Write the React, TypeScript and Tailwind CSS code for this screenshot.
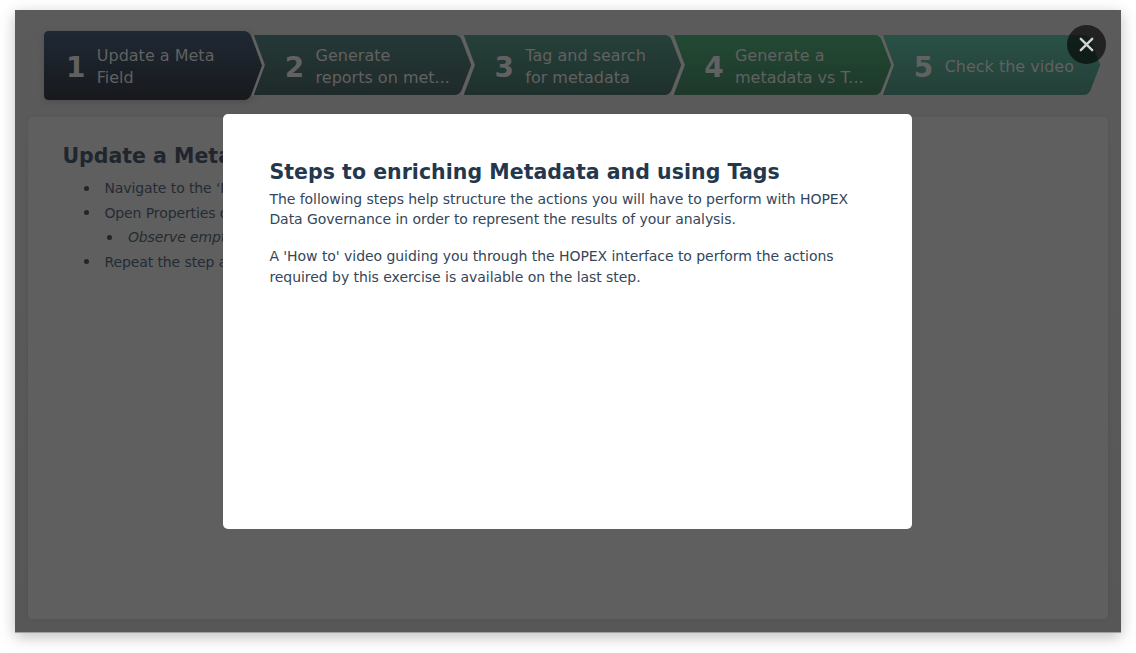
type Step = { n: number; lines: string[]; from: string; to: string };

const steps: Step[] = [
  { n: 1, lines: ["Update a Meta", "Field"], from: "#1f2934", to: "#18191d" },
  { n: 2, lines: ["Generate", "reports on met..."], from: "#243937", to: "#1f2a2a" },
  { n: 3, lines: ["Tag and search", "for metadata"], from: "#254139", to: "#1f302c" },
  { n: 4, lines: ["Generate a", "metadata vs T..."], from: "#224a34", to: "#1e382a" },
  { n: 5, lines: ["Check the video"], from: "#2a5146", to: "#243f37" },
];

function StepShape({ step }: { step: Step }) {
  const first = step.n === 1;
  const last = step.n === steps.length;
  const id = `step-${step.n}`;
  return (
    <svg
      className={
        first
          ? "absolute left-0 top-0 h-[69px] w-[219px] overflow-visible drop-shadow-[0_2px_3px_rgba(0,0,0,0.14)]"
          : "absolute left-0 top-[-0.3px] h-[60px] w-[219px] overflow-visible"
      }
      viewBox={first ? "0 0 219 69" : "0 0 219 60"}
      aria-hidden="true"
    >
      <defs>
        <linearGradient id={id} x1="0" y1="0" x2="0" y2="1">
          <stop offset="0" stopColor={step.from} />
          <stop offset="1" stopColor={step.to} />
        </linearGradient>
      </defs>
      <path
        fill={`url(#${id})`}
        d={
          first
            ? "M5 0H199.5Q205 0 207.3 5.5L218 34.5L207.3 63.5Q205 69 199.5 69H5Q0 69 0 64V5Q0 0 5 0Z"
            : "M0.5 0H200.5Q205.5 0 207.6 5L217.2 30L207.6 55Q205.5 60 200.5 60H0.5Q-0.3 60 0 59.2L11 30L0 0.8Q-0.3 0 0.5 0Z"
        }
      />
      {!last && (
        <path
          d={first ? "M208.8 4.5L219.6 34.5L208.8 64.5" : "M208 0.5L219 30L208 59.5"}
          fill="none"
          stroke="#626262"
          strokeWidth="2.4"
        />
      )}
    </svg>
  );
}

function Steps() {
  return (
    <ol className="flex h-[69px] items-center text-[#616161]">
      {steps.map((s) => (
        <li
          key={s.n}
          className={
            s.n === 1
              ? "relative flex h-[69px] w-[210.3px] shrink-0 items-center pl-[22px]"
              : "relative flex h-[60px] w-[209.7px] shrink-0 items-center pl-[30.5px]"
          }
        >
          <StepShape step={s} />
          <span className="relative mr-[11.3px] mt-[4px] text-[28px] leading-[32px] font-bold">{s.n}</span>
          <span className="relative mt-[2.6px] text-[16px] leading-[22px] whitespace-nowrap">
            {s.lines.map((l) => (
              <span key={l} className="block">{l}</span>
            ))}
          </span>
        </li>
      ))}
    </ol>
  );
}

function Bullet({ text, nested = false }: { text: string; nested?: boolean }) {
  return (
    <li className={nested ? "flex items-center pl-[44.5px] italic" : "flex items-center pl-[21.5px]"}>
      <span className={nested ? "mr-[16px] size-[5px] rounded-full bg-[#20262d]" : "mr-[15.5px] size-[5px] rounded-full bg-[#20262d]"} />
      {text}
    </li>
  );
}

export default function App() {
  return (
    <div className="h-[653px] w-[1136px] overflow-hidden bg-white pt-[10px] pl-[15px] font-['DejaVu_Sans',Verdana,sans-serif]">
      <div className="relative flex h-[623px] w-[1106px] flex-col border-b border-[#a0a0a0] bg-linear-to-b from-[#5b5b5b] to-[#575757] px-[13px] pt-[21px] pb-[13px] shadow-[0_4px_14px_rgba(0,0,0,0.25)]">
        <header className="mb-[17px] pl-[16px]">
          <Steps />
        </header>
        <main className="flex-1 rounded-[4px] bg-[#5f5f5f] pt-[24.7px] pl-[34.4px] text-[#242b33] shadow-[0_0_4px_rgba(0,0,0,0.08)]">
          <h2 className="text-[20.5px] leading-[29px] font-bold text-[#20262d]">Update a Meta Field</h2>
          <ul className="mt-[5.5px] text-[14px] leading-[24.5px] tracking-[-0.1px]">
            <Bullet text="Navigate to the ‘I" />
            <Bullet text="Open Properties of" />
            <Bullet text="Observe empty" nested />
            <Bullet text="Repeat the step a" />
          </ul>
        </main>

        <section
          role="dialog"
          className="absolute top-[103.6px] left-[208.4px] h-[415px] w-[689px] rounded-[5px] bg-white pt-[44px] pl-[46px] text-[#34465a]"
        >
          <h1 className="text-[20.5px] leading-[29px] font-bold tracking-[0.03px] text-[#24384d]">Steps to enriching Metadata and using Tags</h1>
          <div className="mt-[2px] flex flex-col gap-4 text-[14px] leading-[20.7px] tracking-[-0.05px] whitespace-nowrap">
            <p>
              The following steps help structure the actions you will have to perform with HOPEX
              <br />
              Data Governance in order to represent the results of your analysis.
            </p>
            <p>
              A 'How to' video guiding you through the HOPEX interface to perform the actions
              <br />
              required by this exercise is available on the last step.
            </p>
          </div>
        </section>

        <button
          aria-label="Close"
          className="absolute top-[15px] left-[1052px] flex size-[39px] items-center justify-center rounded-full bg-black/62"
        >
          <svg className="size-[15px]" viewBox="0 0 15 15" fill="none" stroke="#d2d2d2" strokeWidth="2.4" strokeLinecap="round">
            <path d="M1.8 1.8L13.2 13.2M13.2 1.8L1.8 13.2" />
          </svg>
        </button>
      </div>
    </div>
  );
}
